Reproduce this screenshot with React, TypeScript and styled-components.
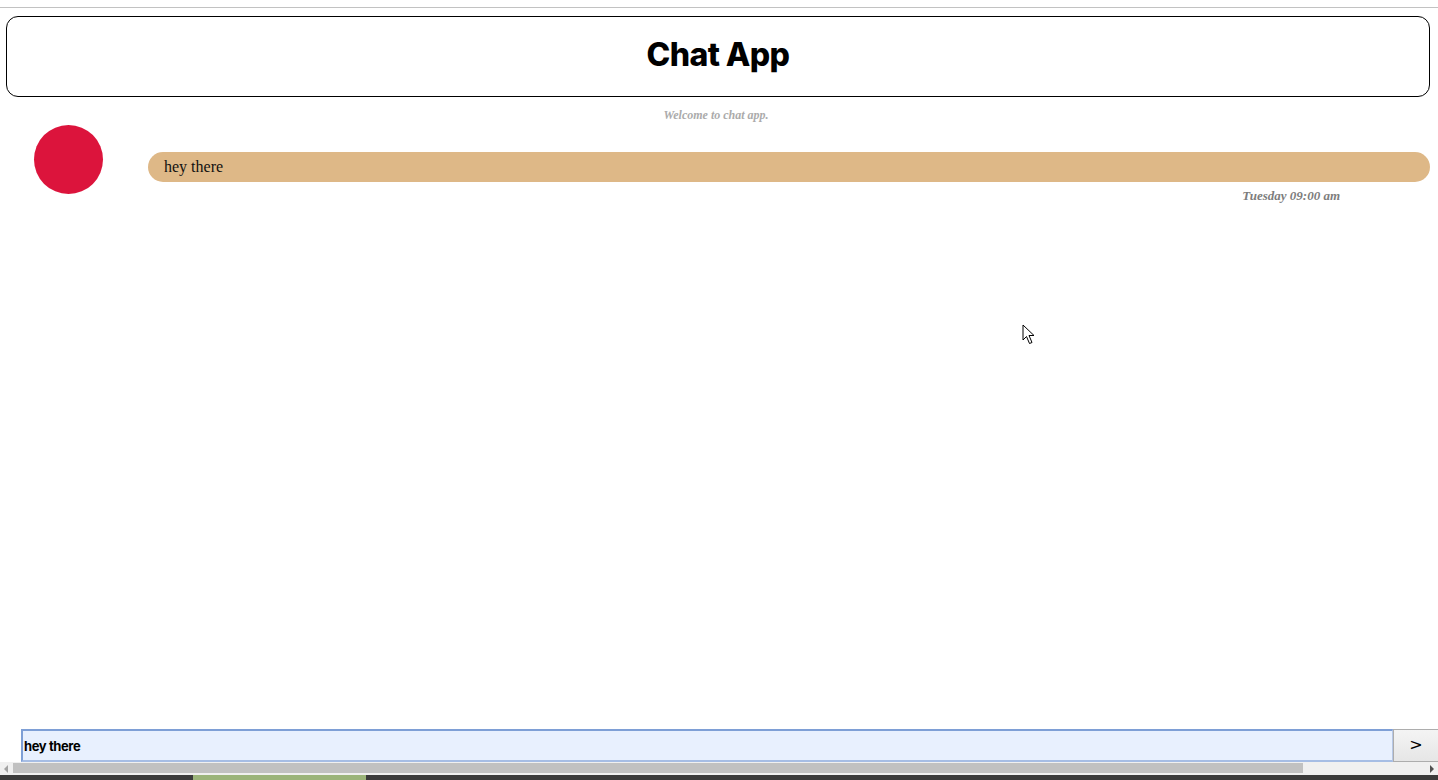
import { useState } from "react";
import styled, { createGlobalStyle } from "styled-components";

const GlobalStyle = createGlobalStyle`
  html, body {
    margin: 0;
    padding: 0;
    background: #fff;
  }
  body {
    font-family: "Liberation Serif", "Times New Roman", serif;
    overflow: hidden;
  }
`;

type Message = {
  id: number;
  text: string;
  time: string;
  color: string;
};

const initialMessages: Message[] = [
  { id: 1, text: "hey there", time: "Tuesday 09:00 am", color: "#dc143c" }
];

export default function App() {
  const [messages] = useState(initialMessages);
  const [draft, setDraft] = useState("hey there");

  return (
    <>
      <GlobalStyle />
      <Page>
        <TopRule />
        <Header>
          <Title>Chat App</Title>
        </Header>
        <Welcome>Welcome to chat app.</Welcome>
        <MessageList>
          {messages.map((message) => (
            <MessageBlock key={message.id}>
              <MessageRow>
                <Avatar color={message.color} />
                <Bubble>{message.text}</Bubble>
              </MessageRow>
              <Timestamp>{message.time}</Timestamp>
            </MessageBlock>
          ))}
        </MessageList>
        <Composer>
          <DraftInput
            value={draft}
            onChange={(e) => setDraft(e.target.value)}
          />
          <SendButton>&gt;</SendButton>
        </Composer>
        <ScrollTrack>
          <ScrollArrow>
            <svg width="5" height="8" viewBox="0 0 5 8">
              <path d="M4 0 L0 4 L4 8 Z" fill="#a3a3a3" />
            </svg>
          </ScrollArrow>
          <ScrollThumb />
          <ScrollRest />
          <ScrollArrow>
            <svg width="5" height="8" viewBox="0 0 5 8">
              <path d="M1 0 L5 4 L1 8 Z" fill="#505050" />
            </svg>
          </ScrollArrow>
        </ScrollTrack>
        <Taskbar>
          <TaskbarGap />
          <TaskbarItem />
        </Taskbar>
        <Pointer width="14" height="21" viewBox="0 0 14 21">
          <path
            d="M1 1 L1 16 L4.5 12.5 L7.5 19.5 L10 18.5 L7 11.5 L12 11.5 Z"
            fill="#fff"
            stroke="#000"
            strokeWidth="1"
            strokeLinejoin="round"
          />
        </Pointer>
      </Page>
    </>
  );
}

const Page = styled.div`
  position: relative;
  height: 780px;
  display: flex;
  flex-direction: column;
  overflow: hidden;
`;

const TopRule = styled.div`
  height: 7px;
  border-bottom: 1px solid #c2c2c2;
  flex-shrink: 0;
`;

const Header = styled.header`
  margin: 8px 8px 0 6px;
  height: 79px;
  border: 1px solid #000;
  border-radius: 12px;
  display: flex;
  align-items: center;
  justify-content: center;
  flex-shrink: 0;
`;

const Title = styled.h1`
  margin: 0 0 4px;
  font-family: "Inter", "Lato", sans-serif;
  font-weight: 800;
  font-size: 32px;
  letter-spacing: -0.6px;
  color: #000;
`;

const Welcome = styled.p`
  margin: 10px 0 0;
  padding-right: 6px;
  text-align: center;
  font-size: 12px;
  font-style: italic;
  font-weight: 700;
  color: #ababab;
  line-height: 16px;
`;

const MessageList = styled.main`
  flex: 1;
  display: flex;
  flex-direction: column;
  padding-top: 3px;
`;

const MessageBlock = styled.div`
  display: flex;
  flex-direction: column;
`;

const MessageRow = styled.div`
  display: flex;
  align-items: flex-start;
  gap: 45px;
  padding: 0 8px 0 34px;
`;

const Avatar = styled.div<{ color: string }>`
  width: 69px;
  height: 69px;
  margin-top: -1px;
  border-radius: 50%;
  background: ${(props) => props.color};
  flex-shrink: 0;
`;

const Bubble = styled.div`
  flex: 1;
  margin-top: 26px;
  height: 30px;
  border-radius: 15px;
  background: #deb887;
  padding: 0 16px;
  display: flex;
  align-items: center;
  font-size: 16px;
  color: #111;
`;

const Timestamp = styled.span`
  align-self: flex-end;
  margin: -6px 98px 0 0;
  font-size: 13px;
  font-style: italic;
  font-weight: 700;
  color: #7d7d7d;
`;

const Composer = styled.form`
  display: flex;
  height: 33px;
  margin-left: 21px;
  flex-shrink: 0;
`;

const DraftInput = styled.input`
  flex: 1;
  box-sizing: border-box;
  height: 33px;
  margin: 0;
  padding: 0 1px;
  background: #e8f0fe;
  border-style: solid;
  border-width: 2px 1px 2px 2px;
  border-color: #7e9fd6 #b7c8e6 #a6bde4 #7e9fd6;
  font-family: "Inter", "Lato", sans-serif;
  font-weight: 700;
  font-size: 13px;
  letter-spacing: -0.4px;
  color: #000;
  outline: none;
`;

const SendButton = styled.button`
  width: 45px;
  height: 33px;
  margin: 0;
  padding: 0 0 3px;
  border: 1px solid #adadad;
  border-right: none;
  background: linear-gradient(#f4f4f4, #e6e6e6);
  font-family: "DejaVu Sans", sans-serif;
  font-size: 16px;
  color: #000;
`;

const ScrollTrack = styled.div`
  display: flex;
  align-items: stretch;
  height: 13px;
  background: #f0f0f0;
  flex-shrink: 0;
`;

const ScrollArrow = styled.div`
  width: 13px;
  display: flex;
  align-items: center;
  justify-content: center;
`;

const ScrollThumb = styled.div`
  width: 1290px;
  margin: 1px 0 2px;
  background: #c1c1c1;
`;

const ScrollRest = styled.div`
  flex: 1;
`;

const Taskbar = styled.div`
  display: flex;
  height: 5px;
  background: #3b3b3b;
  flex-shrink: 0;
`;

const TaskbarGap = styled.div`
  width: 193px;
`;

const TaskbarItem = styled.div`
  width: 173px;
  background: #9bb47a;
`;

const Pointer = styled.svg`
  position: absolute;
  left: 1022px;
  top: 324px;
  pointer-events: none;
`;
